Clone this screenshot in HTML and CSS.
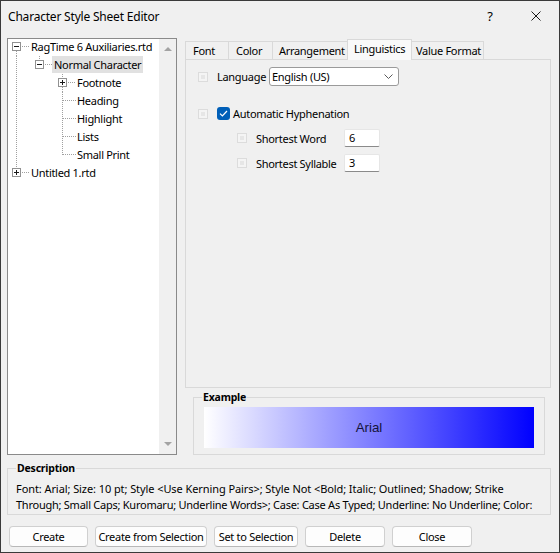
FILE: index.html
```html
<!DOCTYPE html>
<html>
<head>
<meta charset="utf-8">
<title>Character Style Sheet Editor</title>
<link rel="stylesheet" href="styles.css">
</head>
<body>
<div class="window">
  <div class="titlebar">
    <div class="title">Character Style Sheet Editor</div>
    <div class="tb-btn help">?</div>
    <div class="tb-btn close"><svg width="10" height="10" viewBox="0 0 10 10"><path d="M0.5 0.5L9.5 9.5M9.5 0.5L0.5 9.5" stroke="#1a1a1a" stroke-width="1"/></svg></div>
  </div>

  <div class="main">
    <div class="tree">
      <div class="tree-list">
        <div class="row">
          <span class="c bx-down"><span class="box"></span></span>
          <span class="lbl">RagTime 6 Auxiliaries.rtd</span>
        </div>
        <div class="row">
          <span class="c v"></span>
          <span class="c bx-up"><span class="box"></span></span>
          <span class="lbl sel">Normal Character</span>
        </div>
        <div class="row">
          <span class="c v"></span><span class="c"></span>
          <span class="c bx-updown"><span class="box plus"></span></span>
          <span class="lbl">Footnote</span>
        </div>
        <div class="row">
          <span class="c v"></span><span class="c"></span>
          <span class="c tee"></span>
          <span class="lbl">Heading</span>
        </div>
        <div class="row">
          <span class="c v"></span><span class="c"></span>
          <span class="c tee"></span>
          <span class="lbl">Highlight</span>
        </div>
        <div class="row">
          <span class="c v"></span><span class="c"></span>
          <span class="c tee"></span>
          <span class="lbl">Lists</span>
        </div>
        <div class="row">
          <span class="c v"></span><span class="c"></span>
          <span class="c elbow"></span>
          <span class="lbl">Small Print</span>
        </div>
        <div class="row">
          <span class="c bx-up"><span class="box plus"></span></span>
          <span class="lbl">Untitled 1.rtd</span>
        </div>
      </div>
      <div class="scrollbar"><span class="arr up"></span><span class="arr down"></span></div>
    </div>

    <div class="right">
      <div class="tabs">
        <div class="tab t-font">Font</div>
        <div class="tab t-color">Color</div>
        <div class="tab t-arr">Arrangement</div>
        <div class="tab t-ling active">Linguistics</div>
        <div class="tab t-val">Value Format</div>
      </div>
      <div class="panel">
        <div class="prow r1">
          <span class="cb-dis"></span>
          <span class="plabel lang">Language</span>
          <div class="select"><span>English (US)</span><svg width="9" height="5" viewBox="0 0 9 5"><path d="M0.5 0.5L4.5 4.5L8.5 0.5" fill="none" stroke="#5a5a5a" stroke-width="1"/></svg></div>
        </div>
        <div class="prow r2">
          <span class="cb-dis"></span>
          <span class="cb-on"><svg width="9" height="7" viewBox="0 0 9 7"><path d="M1 3.6L3.4 6L8 1" fill="none" stroke="#fff" stroke-width="1.2"/></svg></span>
          <span class="plabel">Automatic Hyphenation</span>
        </div>
        <div class="prow r3">
          <span class="cb-dis sub"></span>
          <span class="plabel field">Shortest Word</span>
          <div class="input">6</div>
        </div>
        <div class="prow r4">
          <span class="cb-dis sub"></span>
          <span class="plabel field">Shortest Syllable</span>
          <div class="input">3</div>
        </div>
      </div>
      <div class="group example">
        <div class="group-label">Example</div>
        <div class="sample">Arial</div>
      </div>
    </div>
  </div>

  <div class="group desc">
    <div class="group-label">Description</div>
    <div class="desc-text">Font: Arial; Size: 10 pt; Style &lt;Use Kerning Pairs&gt;; Style Not &lt;Bold; Italic; Outlined; Shadow; Strike<br><span class="l2">Through; Small Caps; Kuromaru; Underline Words&gt;; Case: Case As Typed; Underline: No Underline; Color:</span></div>
  </div>

  <div class="buttons">
    <div class="btn b-create">Create</div>
    <div class="btn b-cfs">Create from Selection</div>
    <div class="btn b-sts">Set to Selection</div>
    <div class="btn b-del">Delete</div>
    <div class="btn b-close">Close</div>
  </div>
</div>
</body>
</html>
```

FILE: styles.css
```css
:root {
  --dv: repeating-linear-gradient(to bottom, #a0a0a0 0 1px, transparent 1px 2px);
  --dh: repeating-linear-gradient(to right, #a0a0a0 0 1px, transparent 1px 2px);
}
* { box-sizing: border-box; }
html, body { margin: 0; padding: 0; background: #f0f0f0; }
body {
  font-family: "Noto Sans", "Open Sans", sans-serif;
  font-size: 11px;
  letter-spacing: -0.3px;
  color: #000;
}
.window {
  width: 560px;
  height: 553px;
  border: 1px solid #3a3a3a;
  background: #f0f0f0;
  display: flex;
  flex-direction: column;
}
.titlebar {
  height: 30px;
  display: flex;
  align-items: center;
  flex: none;
}
.title {
  flex: 1;
  padding-left: 7px;
  font-size: 12px;
  letter-spacing: -0.2px;
}
.tb-btn {
  width: 46px;
  height: 30px;
  display: flex;
  align-items: center;
  justify-content: center;
}
.help { font-size: 13px; letter-spacing: 0; }

.main {
  display: flex;
  padding: 7px 8px 0 6px;
  flex: none;
}
.tree {
  width: 170px;
  height: 417px;
  border: 1px solid #8a8a8a;
  background: #fff;
  display: flex;
  flex: none;
}
.tree-list {
  flex: 1;
  margin-top: -1px;
  overflow: hidden;
}
.row {
  display: flex;
  height: 18px;
  align-items: flex-start;
  white-space: nowrap;
}
.c {
  width: 23px;
  height: 18px;
  flex: none;
  display: flex;
  align-items: flex-start;
}
.box {
  margin: 4px 0 0 4px;
  width: 9px;
  height: 9px;
  border: 1px solid #919191;
  background: #fff;
  position: relative;
}
.box::before {
  content: "";
  position: absolute;
  left: 1px; top: 3px;
  width: 5px; height: 1px;
  background: #1a1a1a;
}
.box.plus::after {
  content: "";
  position: absolute;
  left: 3px; top: 1px;
  width: 1px; height: 5px;
  background: #1a1a1a;
}
.v { background: var(--dv) 8px 0 / 1px 18px no-repeat; }
.tee { background: var(--dv) 8px 0 / 1px 18px no-repeat, var(--dh) 9px 8px / 13px 1px no-repeat; }
.elbow { background: var(--dv) 8px 0 / 1px 9px no-repeat, var(--dh) 9px 8px / 13px 1px no-repeat; }
.bx-down { background: var(--dv) 8px 13px / 1px 5px no-repeat, var(--dh) 14px 8px / 8px 1px no-repeat; }
.bx-up { background: var(--dv) 8px 0 / 1px 4px no-repeat, var(--dh) 14px 8px / 8px 1px no-repeat; }
.bx-updown { background: var(--dv) 8px 0 / 1px 4px no-repeat, var(--dv) 8px 13px / 1px 5px no-repeat, var(--dh) 14px 8px / 8px 1px no-repeat; }
.lbl {
  line-height: 17px;
  height: 17px;
}
.lbl.sel {
  background: #e1e1e1;
  padding: 0 2px;
  margin-left: -2px;
}
.scrollbar {
  width: 17px;
  flex: none;
  background: #f0f0f0;
  display: flex;
  flex-direction: column;
  justify-content: space-between;
  align-items: center;
  padding: 8px 0 8px;
}
.arr {
  width: 0; height: 0;
  border-left: 4px solid transparent;
  border-right: 4px solid transparent;
}
.arr.up { border-bottom: 4px solid #a3a3a3; }
.arr.down { border-top: 4px solid #a3a3a3; }

.right {
  margin-left: 8px;
  margin-top: 1px;
  width: 367px;
  display: flex;
  flex-direction: column;
}
.tabs {
  display: flex;
  height: 20px;
  align-items: flex-end;
  position: relative;
  z-index: 1;
}
.tab {
  height: 18px;
  line-height: 17px;
  padding-left: 7px;
  border: 1px solid #d9d9d9;
  border-bottom: none;
  margin-right: -1px;
  background: #f0f0f0;
  white-space: nowrap;
}
.tab.active {
  height: 21px;
  margin-bottom: -1px;
  background: #f9f9f9;
  padding-left: 6px;
  line-height: 17px;
}
.t-font { width: 44px; }
.t-color { width: 45px; }
.t-arr { width: 76px; padding-left: 6px; }
.t-ling { width: 65px; }
.t-val { width: 73px; padding-left: 4px; }
.panel {
  height: 329px;
  border: 1px solid #d9d9d9;
  background: #f0f0f0;
  padding-top: 7px;
}
.prow {
  display: flex;
  align-items: center;
  white-space: nowrap;
}
.r1 { height: 19px; }
.r2 { height: 19px; margin-top: 18px; }
.r3 { height: 18px; margin-top: 6px; }
.r4 { height: 18px; margin-top: 7px; }
.cb-dis {
  width: 10px;
  height: 10px;
  flex: none;
  margin: 0 9px 0 12px;
  border: 1px solid #dcdcdc;
  background: #e6e6e6;
  box-shadow: inset 0 0 0 2px #f4f4f4;
}
.cb-dis.sub { margin-left: 51px; }
.plabel.lang { width: 52px; }
.plabel.field { width: 88px; }
.select {
  width: 130px;
  height: 19px;
  background: #fff;
  border: 1px solid #9a9a9a;
  border-radius: 3px;
  display: flex;
  align-items: center;
  justify-content: space-between;
  padding: 0 5px 0 2px;
}
.cb-on {
  width: 13px;
  height: 13px;
  flex: none;
  border-radius: 3px;
  background: #005fb8;
  display: flex;
  align-items: center;
  justify-content: center;
  margin-right: 3px;
}
.input {
  width: 36px;
  height: 18px;
  background: #fff;
  border: 1px solid #e6e6e6;
  border-bottom-color: #8a8a8a;
  border-radius: 2px;
  padding-left: 4px;
  line-height: 16px;
}

.group {
  border: 1px solid #d9d9d9;
  display: flex;
  flex-direction: column;
  flex: none;
}
.group-label {
  align-self: flex-start;
  margin: -8px 0 0 8px;
  padding: 0 1px;
  line-height: 15px;
  height: 15px;
  background: #f0f0f0;
  font-weight: bold;
  font-size: 10.5px;
  letter-spacing: -0.2px;
}
.example {
  margin: 9px 6px 0 8px;
  height: 58px;
}
.sample {
  margin: 2px 10px 0 10px;
  height: 41px;
  background: linear-gradient(to right, #ffffff 0%, #0000ff 100%);
  display: flex;
  align-items: center;
  justify-content: center;
  font-family: "Liberation Sans", Arial, sans-serif;
  font-size: 13.33px;
  letter-spacing: 0;
  color: #14143a;
}
.desc {
  margin: 13px 8px 0 6px;
  height: 47px;
}
.desc-text {
  margin-top: 5px;
  padding: 0 4px 0 8px;
  line-height: 16px;
  height: 32px;
  overflow: hidden;
  white-space: nowrap;
  letter-spacing: -0.08px;
}
.desc-text .l2 { letter-spacing: -0.25px; }
.buttons {
  display: flex;
  gap: 7px;
  margin-top: 11px;
  padding-left: 8px;
}
.btn {
  height: 21px;
  background: #fdfdfd;
  border: 1px solid #d0d0d0;
  border-bottom-color: #b8b8b8;
  border-radius: 4px;
  display: flex;
  align-items: center;
  justify-content: center;
  white-space: nowrap;
}
.b-create { width: 79px; }
.b-cfs { width: 112px; }
.b-sts { width: 84px; }
.b-del { width: 80px; }
.b-close { width: 80px; }
```
